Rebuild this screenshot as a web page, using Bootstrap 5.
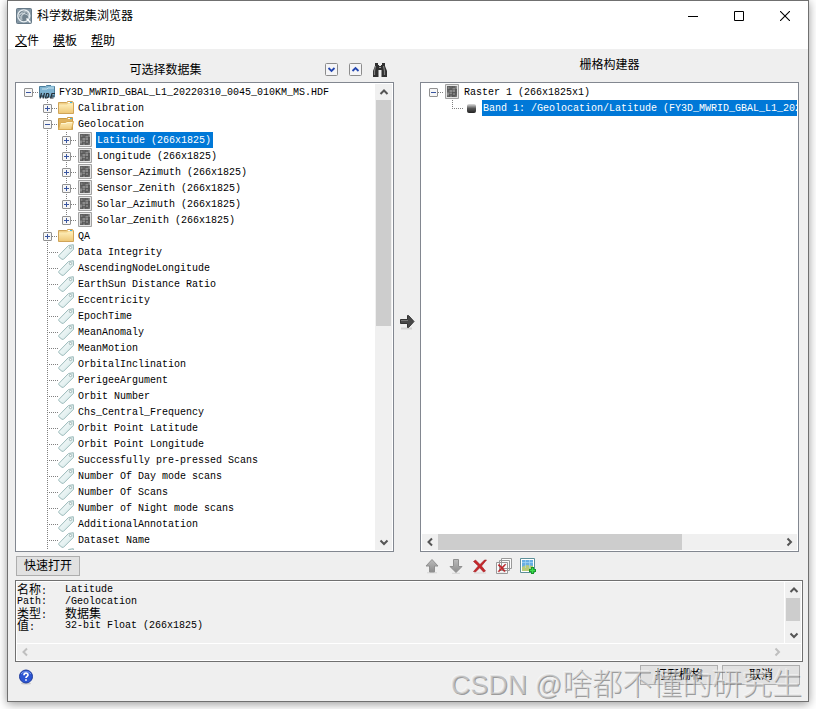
<!DOCTYPE html>
<html lang="zh-CN">
<head>
<meta charset="utf-8">
<meta name="viewport" content="width=device-width, initial-scale=1">
<title>科学数据集浏览器</title>
<link href="https://cdn.jsdelivr.net/npm/bootstrap@5.3.0/dist/css/bootstrap.min.css" rel="stylesheet">
<style>
  body { font: 12px/16px "Liberation Sans", "Noto Sans CJK SC", sans-serif; color: #000; background: #fff; padding: 0 7px 7px; height: 100vh; overflow: hidden; }
  svg { display: block; flex: none; }
  button { font: inherit; color: #000; }
  .window-frame { height: 100%; border: 1px solid #707070; background: #efefef; box-shadow: 0 2px 9px rgba(0,0,0,.4); }
  .title-bar { height: 30px; padding-left: 8px; gap: 5px; }
  .caption-btn { width: 46px; height: 30px; border: 0; background: none; padding: 0; }
  .menu-bar { height: 18px; padding-left: 7px; gap: 14px; line-height: 20px; }
  .menu-bar a { color: #000; text-decoration: none; }
  .workspace { padding: 0 9px 0 7px; min-height: 0; }
  .pane-col { flex: 1 1 0; min-width: 0; }
  .pane-head { height: 33px; flex: none; }
  .pane-tools { padding: 9px 6px 0 0; }
  .icon-btn { border: 0; background: none; padding: 0; width: 16px; height: 16px; flex: none; }
  .push-col { width: 26px; }
  .tree-box { border: 1px solid #828790; background: #fff; padding: 1px; min-height: 0; }
  .tree-list { font-family: "Liberation Mono", monospace; font-size: 10px; min-width: 0; padding-left: 7px; }
  .tree-list li { display: flex; height: 16px; white-space: nowrap; }
  .tree-label { margin-left: 3px; padding: 0 2px 0 1px; line-height: 18px; }
  .tree-label.picked { background: #0078d7; color: #fff; }
  .vline { background: repeating-linear-gradient(#808080 0 1px, transparent 1px 2px) 4px 0 / 1px 100% no-repeat; }
  .lead-space { width: 19px; flex: none; }
  .joint { width: 15px; flex: none; display: flex; align-items: center; }
  .joint::after { content: ""; flex: 1; height: 1px; background: repeating-linear-gradient(90deg, #808080 0 1px, transparent 1px 2px); }
  .joint.leaf { padding-left: 4px; }
  .vline.last-one { background-size: 1px 8px; }
  .toggle-node { width: 9px; height: 9px; padding: 0; border: 1px solid #919191; border-radius: 1px; background: linear-gradient(90deg, #3955a0, #3955a0) center / 5px 1px no-repeat, #f6f6f6; }
  .toggle-node.closed { background: linear-gradient(#3955a0, #3955a0) center / 5px 1px no-repeat, linear-gradient(#3955a0, #3955a0) center / 1px 5px no-repeat, #f6f6f6; }
  .scroll-track { background: #f0f0f0; flex: none; }
  .scroll-track.upright { width: 17px; padding: 0 1px; }
  .scroll-track button { width: 16px; height: 16px; padding: 0; border: 0; background: none; flex: none; }
  .scroll-thumb { background: #cdcdcd; }
  .thumb-tree { flex: 0 0 52%; } .thumb-raster { flex: 0 0 71%; } .thumb-info { flex: 0 0 80%; }
  .foot-tools { height: 28px; flex: none; }
  .win-btn { border: 1px solid #adadad; background: #e1e1e1; height: 20px; padding: 0; line-height: 16px; }
  .quick-btn { width: 64px; margin-left: 1px; }
  .act-btn { width: 78px; }
  .info-box { border: 1px solid #707070; margin: 0 5px 0 7px; padding: 1px; background: #f0f0f0; box-shadow: inset 0 0 0 1px #fff; }
  .info-text { height: 61px; }
  .info-grid { display: grid; grid-template-columns: 48px 1fr; grid-auto-rows: 12px; line-height: 12px; margin: 0; padding: 2px 0 0; }
  .info-grid dt, .info-grid dd { font-weight: 400; margin: 0; white-space: nowrap; }
  .mono-text { font-family: "Liberation Mono", monospace; font-size: 10px; }
  .status-bar { height: 40px; padding: 3px 8px 0 10px; gap: 4px; }
  .brand-mark { position: absolute; right: 6px; bottom: -4px; font: 30px/40px "Noto Sans CJK SC", sans-serif; font-weight: 300; color: rgba(215,215,215,.6); text-shadow: 1px 1px 0 rgba(100,100,100,.6), -1px -1px 0 rgba(250,250,250,.5); pointer-events: none; white-space: nowrap; }
  .brand-mark span { font-family: "Liberation Sans", sans-serif; font-size: 27px; }
</style>
</head>
<body>
<svg width="0" height="0" class="position-absolute" aria-hidden="true">
  <defs>
    <linearGradient id="gold" x2="0" y2="1"><stop stop-color="#fff0bd"/><stop offset="1" stop-color="#eec878"/></linearGradient>
    <linearGradient id="teal" x2="1" y2="1"><stop stop-color="#fff"/><stop offset="1" stop-color="#cfe6e6"/></linearGradient>
    <linearGradient id="iron" x2="0" y2="1"><stop stop-color="#ddd"/><stop offset=".5" stop-color="#555"/><stop offset="1" stop-color="#222"/></linearGradient>
    <linearGradient id="ash" x2="0" y2="1"><stop stop-color="#bbb"/><stop offset="1" stop-color="#8d8d8d"/></linearGradient>
  </defs>
  <symbol id="folder" viewBox="0 0 16 16"><path d="M.5 13.500v-11h8l1-1h5l1 1.500v10.500z" fill="#f0cf86" stroke="#d0a458"/><path d="M1 4.500h8l1.500-1H15V13H1z" fill="url(#gold)"/><path d="M10 2.500h3" stroke="#fff"/><path d="M12 2.500h2" stroke="#3bb4e8"/></symbol>
  <symbol id="folder-open" viewBox="0 0 16 16"><path d="M.5 13.500v-11h8l1-1h5v12z" fill="#dfb25f" stroke="#c99a43"/><path d="M10 2.500h2" stroke="#fff"/><path d="M12 2.500h2" stroke="#4bb8e6"/><path d="M2.500 6.500h5l1.500-1h6.500L13.500 13.500H.5z" fill="url(#gold)" stroke="#d8aa55"/><path d="M3 7.500h5l1.500-1H14" fill="none" stroke="#fff6d2"/></symbol>
  <symbol id="hdf" viewBox="0 0 16 16"><path d="M.5 13V2.500h6l1-1h7l1 1V13z" fill="#7fb3d0" stroke="#4d7f9c"/><path d="M3 5h5l1-1h6" fill="none" stroke="#c6e2ef"/><path d="M12 1.500h3" stroke="#e8f8ff"/><path d="M1 14.500l1.500-5.500M4 14.500l1.500-5.500M2 12h3M6.500 14l1.200-4.500h1.300c1.500 0 .8 4.500-1.300 4.500zM11.500 14.500l1.500-5h3M12.300 12H15M11.500 14h3" fill="none" stroke="#263038" stroke-width="1.200"/></symbol>
  <symbol id="grid-tile" viewBox="0 0 16 16"><path d="M1.500.500h13v14h-13z" fill="#e4e4e4" stroke="#a2a2a2"/><path d="M3 2h10v11H3z" fill="#636363"/><path d="M3 8h2V6h3V4h3V2h2v3h-2v3H8v2H5v2H3z" fill="#8c8c8c"/><path d="M9 9h2v2H9zM11 11h2v2h-2zM6 11h2v2H6zM4 3h2v2H4z" fill="#7f7f7f"/><path d="M5.500 2v11M8.500 2v11M11.500 2v11M3 5.500h10M3 8.500h10M3 11.500h10" stroke="#505050" stroke-width=".4"/></symbol>
  <symbol id="tag" viewBox="0 0 16 16"><path d="M.8 11.500 10.500 1.500 15.300.700 15.500 5.300 5.500 15.300 4 15.300.8 12.700z" fill="url(#teal)" stroke="#9ab9b9"/><circle cx="12.500" cy="3.500" r="1.200" fill="#fff" stroke="#8ba6a6" stroke-width=".8"/></symbol>
  <symbol id="chev-up" viewBox="0 0 16 16"><path d="M4.500 10 8 6.500 11.500 10" fill="none" stroke="currentColor" stroke-width="2"/></symbol>
  <symbol id="chev-down" viewBox="0 0 16 16"><path d="M4.500 6.500 8 10l3.500-3.500" fill="none" stroke="currentColor" stroke-width="2"/></symbol>
  <symbol id="chev-left" viewBox="0 0 16 16"><path d="M10 4.500 6.500 8l3.500 3.500" fill="none" stroke="currentColor" stroke-width="2"/></symbol>
  <symbol id="chev-right" viewBox="0 0 16 16"><path d="M6.500 4.500 10 8l-3.500 3.500" fill="none" stroke="currentColor" stroke-width="2"/></symbol>
  <symbol id="arrow-up" viewBox="0 0 16 16"><path d="M3 14.800h10" stroke="#d5d5d5"/><path d="M8 1.500 14 8h-3.500v6h-5V8H2z" fill="url(#ash)" stroke="#909090"/></symbol>
  <symbol id="arrow-down" viewBox="0 0 16 16"><path d="M4 15.300h8" stroke="#d5d5d5"/><path d="M8 14.500 14 8.500h-3.500v-7h-5v7H2z" fill="url(#ash)" stroke="#909090"/></symbol>
  <symbol id="cross" viewBox="0 0 16 16"><path d="M2 15h12" stroke="#d9d3d3"/><path d="M1.500 3.500 3.500 2 8 6.500 12.500 2H14.500L9.500 8 13.500 13 11.500 14 7.700 9.800 3.500 14 1.500 13.500 6.300 8z" fill="#c6262b" stroke="#9e1c20" stroke-width=".6"/></symbol>
</svg>

<main class="window-frame d-flex flex-column position-relative">
  <header class="bg-white">
    <div class="title-bar d-flex align-items-center">
      <svg width="16" height="16" viewBox="0 0 16 16"><rect x=".5" y=".5" width="15" height="15" rx="1" fill="#8295a3" stroke="#667987"/><circle cx="7.800" cy="7.800" r="6" fill="#71828e" stroke="#e8eef1" stroke-width="1.300"/><path d="M3 9c1-4 4-6 7-5M4 12c0-4 2-6 5-7M6 12c-1-3 0-6 3-7M9.500 3c3 2 4 5 2 9M2.500 7c3-2 7-2 10 1" fill="none" stroke="#d8e1e6" stroke-width=".8"/><path d="m10.500 10.500 4 4" stroke="#fff" stroke-width="1.500"/></svg>
      <span class="flex-grow-1">科学数据集浏览器</span>
      <div class="d-flex">
        <button class="caption-btn" aria-label="最小化"><svg class="mx-auto" width="10" height="10"><path d="M0 5.500h10" stroke="#000"/></svg></button>
        <button class="caption-btn" aria-label="最大化"><svg class="mx-auto" width="10" height="10"><path d="M.5.500h9v9h-9z" fill="none" stroke="#000"/></svg></button>
        <button class="caption-btn" aria-label="关闭"><svg class="mx-auto" width="10" height="10"><path d="m0 0 10 10M10 0 0 10" stroke="#000" stroke-width="1.100"/></svg></button>
      </div>
    </div>
    <nav class="menu-bar d-flex">
      <a href="#"><u>文</u>件</a><a href="#"><u>模</u>板</a><a href="#"><u>帮</u>助</a>
    </nav>
  </header>

  <div class="workspace d-flex flex-grow-1">
    <section class="pane-col d-flex flex-column">
      <div class="pane-head pane-tools d-flex align-items-center gap-2">
        <span class="flex-grow-1 text-center">可选择数据集</span>
        <button class="icon-btn" aria-label="全部展开"><svg width="16" height="16"><rect x="1.500" y="1.500" width="12" height="12" rx="1" fill="#f5f5f7" stroke="#8c8c8c"/><path d="m4.500 6 3 3 3-3" fill="none" stroke="#2447b0" stroke-width="1.800"/></svg></button>
        <button class="icon-btn" aria-label="全部折叠"><svg width="16" height="16"><rect x="1.500" y="1.500" width="12" height="12" rx="1" fill="#f5f5f7" stroke="#8c8c8c"/><path d="m4.500 9 3-3 3 3" fill="none" stroke="#2447b0" stroke-width="1.800"/></svg></button>
        <button class="icon-btn" aria-label="查找"><svg width="16" height="16"><path d="M3 1h3v2h1v1h2V3h1V1h3v3l2 5v6H9.500V8h-3v7H1V9l2-5z" fill="#303030"/><path d="M3.500 4 2.500 9v4M11.500 4l1 5v4" fill="none" stroke="#808080" stroke-width="1.200"/><path d="M7 5.500h2" stroke="#999"/></svg></button>
      </div>
      <div class="tree-box d-flex flex-grow-1">
        <ul class="tree-list list-unstyled mb-0 flex-grow-1 overflow-hidden">
          <li><span class="joint"><button class="toggle-node" aria-label="折叠"></button></span><svg width="16" height="16"><use href="#hdf"/></svg><span class="tree-label">FY3D_MWRID_GBAL_L1_20220310_0045_010KM_MS.HDF</span></li>
          <li><span class="lead-space"></span><span class="joint vline"><button class="toggle-node closed" aria-label="展开"></button></span><svg width="16" height="16"><use href="#folder"/></svg><span class="tree-label">Calibration</span></li>
          <li><span class="lead-space"></span><span class="joint vline"><button class="toggle-node" aria-label="折叠"></button></span><svg width="16" height="16"><use href="#folder-open"/></svg><span class="tree-label">Geolocation</span></li>
          <li><span class="lead-space"></span><span class="lead-space vline"></span><span class="joint vline"><button class="toggle-node closed" aria-label="展开"></button></span><svg width="16" height="16"><use href="#grid-tile"/></svg><span class="tree-label picked">Latitude (266x1825)</span></li>
          <li><span class="lead-space"></span><span class="lead-space vline"></span><span class="joint vline"><button class="toggle-node closed" aria-label="展开"></button></span><svg width="16" height="16"><use href="#grid-tile"/></svg><span class="tree-label">Longitude (266x1825)</span></li>
          <li><span class="lead-space"></span><span class="lead-space vline"></span><span class="joint vline"><button class="toggle-node closed" aria-label="展开"></button></span><svg width="16" height="16"><use href="#grid-tile"/></svg><span class="tree-label">Sensor_Azimuth (266x1825)</span></li>
          <li><span class="lead-space"></span><span class="lead-space vline"></span><span class="joint vline"><button class="toggle-node closed" aria-label="展开"></button></span><svg width="16" height="16"><use href="#grid-tile"/></svg><span class="tree-label">Sensor_Zenith (266x1825)</span></li>
          <li><span class="lead-space"></span><span class="lead-space vline"></span><span class="joint vline"><button class="toggle-node closed" aria-label="展开"></button></span><svg width="16" height="16"><use href="#grid-tile"/></svg><span class="tree-label">Solar_Azimuth (266x1825)</span></li>
          <li><span class="lead-space"></span><span class="lead-space vline"></span><span class="joint vline last-one"><button class="toggle-node closed" aria-label="展开"></button></span><svg width="16" height="16"><use href="#grid-tile"/></svg><span class="tree-label">Solar_Zenith (266x1825)</span></li>
          <li><span class="lead-space"></span><span class="joint vline"><button class="toggle-node closed" aria-label="展开"></button></span><svg width="16" height="16"><use href="#folder"/></svg><span class="tree-label">QA</span></li>
          <li><span class="lead-space"></span><span class="joint leaf vline"></span><svg width="16" height="16"><use href="#tag"/></svg><span class="tree-label">Data Integrity</span></li>
          <li><span class="lead-space"></span><span class="joint leaf vline"></span><svg width="16" height="16"><use href="#tag"/></svg><span class="tree-label">AscendingNodeLongitude</span></li>
          <li><span class="lead-space"></span><span class="joint leaf vline"></span><svg width="16" height="16"><use href="#tag"/></svg><span class="tree-label">EarthSun Distance Ratio</span></li>
          <li><span class="lead-space"></span><span class="joint leaf vline"></span><svg width="16" height="16"><use href="#tag"/></svg><span class="tree-label">Eccentricity</span></li>
          <li><span class="lead-space"></span><span class="joint leaf vline"></span><svg width="16" height="16"><use href="#tag"/></svg><span class="tree-label">EpochTime</span></li>
          <li><span class="lead-space"></span><span class="joint leaf vline"></span><svg width="16" height="16"><use href="#tag"/></svg><span class="tree-label">MeanAnomaly</span></li>
          <li><span class="lead-space"></span><span class="joint leaf vline"></span><svg width="16" height="16"><use href="#tag"/></svg><span class="tree-label">MeanMotion</span></li>
          <li><span class="lead-space"></span><span class="joint leaf vline"></span><svg width="16" height="16"><use href="#tag"/></svg><span class="tree-label">OrbitalInclination</span></li>
          <li><span class="lead-space"></span><span class="joint leaf vline"></span><svg width="16" height="16"><use href="#tag"/></svg><span class="tree-label">PerigeeArgument</span></li>
          <li><span class="lead-space"></span><span class="joint leaf vline"></span><svg width="16" height="16"><use href="#tag"/></svg><span class="tree-label">Orbit Number</span></li>
          <li><span class="lead-space"></span><span class="joint leaf vline"></span><svg width="16" height="16"><use href="#tag"/></svg><span class="tree-label">Chs_Central_Frequency</span></li>
          <li><span class="lead-space"></span><span class="joint leaf vline"></span><svg width="16" height="16"><use href="#tag"/></svg><span class="tree-label">Orbit Point Latitude</span></li>
          <li><span class="lead-space"></span><span class="joint leaf vline"></span><svg width="16" height="16"><use href="#tag"/></svg><span class="tree-label">Orbit Point Longitude</span></li>
          <li><span class="lead-space"></span><span class="joint leaf vline"></span><svg width="16" height="16"><use href="#tag"/></svg><span class="tree-label">Successfully pre-pressed Scans</span></li>
          <li><span class="lead-space"></span><span class="joint leaf vline"></span><svg width="16" height="16"><use href="#tag"/></svg><span class="tree-label">Number Of Day mode scans</span></li>
          <li><span class="lead-space"></span><span class="joint leaf vline"></span><svg width="16" height="16"><use href="#tag"/></svg><span class="tree-label">Number Of Scans</span></li>
          <li><span class="lead-space"></span><span class="joint leaf vline"></span><svg width="16" height="16"><use href="#tag"/></svg><span class="tree-label">Number of Night mode scans</span></li>
          <li><span class="lead-space"></span><span class="joint leaf vline"></span><svg width="16" height="16"><use href="#tag"/></svg><span class="tree-label">AdditionalAnnotation</span></li>
          <li><span class="lead-space"></span><span class="joint leaf vline"></span><svg width="16" height="16"><use href="#tag"/></svg><span class="tree-label">Dataset Name</span></li>
          <li><span class="lead-space"></span><span class="joint leaf vline"></span><svg width="16" height="16"><use href="#tag"/></svg></li>
        </ul>
        <div class="scroll-track upright d-flex flex-column">
          <button aria-label="向上滚动"><svg width="16" height="16" color="#555"><use href="#chev-up"/></svg></button>
          <div class="flex-grow-1 d-flex flex-column"><div class="scroll-thumb thumb-tree"></div></div>
          <button aria-label="向下滚动"><svg width="16" height="16" color="#555"><use href="#chev-down"/></svg></button>
        </div>
      </div>
      <div class="foot-tools d-flex align-items-center"><button class="win-btn quick-btn">快速打开</button></div>
    </section>

    <div class="push-col d-flex align-items-center justify-content-center pt-3">
      <button class="icon-btn" aria-label="添加到栅格"><svg width="16" height="16"><path d="M2 14.500h11" stroke="#d2d2d2" stroke-width="2"/><path d="M1.500 5.500h7v-4h1l5.500 6-5.500 6h-1v-4h-7z" fill="#484848" stroke="#333"/><path d="M2 6.500h7" stroke="#777"/></svg></button>
    </div>

    <section class="pane-col d-flex flex-column">
      <div class="pane-head text-center pt-2">栅格构建器</div>
      <div class="tree-box d-flex flex-column flex-grow-1">
        <ul class="tree-list list-unstyled mb-0 flex-grow-1 overflow-hidden">
          <li><span class="joint"><button class="toggle-node" aria-label="折叠"></button></span><svg width="16" height="16"><use href="#grid-tile"/></svg><span class="tree-label">Raster 1 (266x1825x1)</span></li>
          <li><span class="lead-space"></span><span class="joint leaf vline last-one"></span><svg width="16" height="16"><rect x="4" y="4" width="9" height="9" rx="2" fill="url(#iron)"/></svg><span class="tree-label picked">Band 1: /Geolocation/Latitude (FY3D_MWRID_GBAL_L1_20220310_0045_010KM_MS.HDF)</span></li>
        </ul>
        <div class="scroll-track d-flex">
          <button aria-label="向左滚动"><svg width="16" height="16" color="#555"><use href="#chev-left"/></svg></button>
          <div class="flex-grow-1 d-flex"><div class="scroll-thumb thumb-raster"></div></div>
          <button aria-label="向右滚动"><svg width="16" height="16" color="#555"><use href="#chev-right"/></svg></button>
        </div>
      </div>
      <div class="foot-tools d-flex align-items-center gap-2 ps-1">
        <button class="icon-btn" aria-label="上移"><svg width="16" height="16"><use href="#arrow-up"/></svg></button>
        <button class="icon-btn" aria-label="下移"><svg width="16" height="16"><use href="#arrow-down"/></svg></button>
        <button class="icon-btn" aria-label="删除"><svg width="16" height="16"><use href="#cross"/></svg></button>
        <button class="icon-btn" aria-label="全部删除"><svg width="16" height="16"><path d="M5.500.500h10v10h-10zM3.500 2.500h10v10h-10zM.5 4.500h11v11H.5z" fill="#fbfbfb" stroke="#999"/><use href="#cross" x="1" y="5" width="10" height="10"/></svg></button>
        <button class="icon-btn" aria-label="新建栅格"><svg width="16" height="16"><path d="M.5.500h14v14H.5z" fill="#fff" stroke="#5d8f98"/><path d="M2 2h11v11H2z" fill="#68aee3"/><path d="M2 9 6 7l7 1v5H2z" fill="#b9cb78"/><path d="M2 4.500h11M5.500 2v8M9.500 2v8" stroke="#a8d7f4" stroke-width=".7"/><path d="M9 12.500h7M12.500 9v7" stroke="#159326" stroke-width="3"/><path d="M10 12.500h5M12.500 10v5" stroke="#3ddb4d" stroke-width="1.400"/></svg></button>
      </div>
    </section>
  </div>

  <section class="info-box">
    <div class="d-flex info-text">
      <dl class="info-grid flex-grow-1">
        <dt>名称<span class="mono-text">:</span></dt><dd class="mono-text">Latitude</dd>
        <dt class="mono-text">Path:</dt><dd class="mono-text">/Geolocation</dd>
        <dt>类型<span class="mono-text">:</span></dt><dd>数据集</dd>
        <dt>值<span class="mono-text">:</span></dt><dd class="mono-text">32-bit Float (266x1825)</dd>
      </dl>
      <div class="scroll-track upright d-flex flex-column border-start border-white">
        <button aria-label="向上滚动"><svg width="16" height="16" color="#555"><use href="#chev-up"/></svg></button>
        <div class="flex-grow-1 d-flex flex-column"><div class="scroll-thumb thumb-info"></div></div>
        <button aria-label="向下滚动"><svg width="16" height="16" color="#555"><use href="#chev-down"/></svg></button>
      </div>
    </div>
    <div class="scroll-track d-flex justify-content-between border-top border-white pe-3">
      <button disabled aria-label="向左滚动"><svg width="16" height="16" color="#bfbfbf"><use href="#chev-left"/></svg></button>
      <button disabled aria-label="向右滚动"><svg width="16" height="16" color="#bfbfbf"><use href="#chev-right"/></svg></button>
    </div>
  </section>

  <footer class="status-bar d-flex align-items-start">
    <button class="icon-btn me-auto mt-1" aria-label="帮助"><svg width="16" height="16"><ellipse cx="8" cy="14.500" rx="5" ry="1" fill="#ccc"/><circle cx="8" cy="7.500" r="6.500" fill="#2c55d2" stroke="#1e3b9c"/><path d="M3 5a5.500 4 0 0 1 10 0" fill="none" stroke="#7597ee"/><path d="M6 6.200c0-2.600 4-2.600 4-.3 0 1.500-2 1.400-2 3.100M8 10.300v1.500" fill="none" stroke="#fff" stroke-width="1.700"/></svg></button>
    <button class="win-btn act-btn">打开栅格</button>
    <button class="win-btn act-btn">取消</button>
  </footer>
  <div class="brand-mark"><span>CSDN @</span>啥都不懂的研究生</div>
</main>
<script src="https://cdn.jsdelivr.net/npm/bootstrap@5.3.0/dist/js/bootstrap.bundle.min.js"></script>
</body>
</html>
